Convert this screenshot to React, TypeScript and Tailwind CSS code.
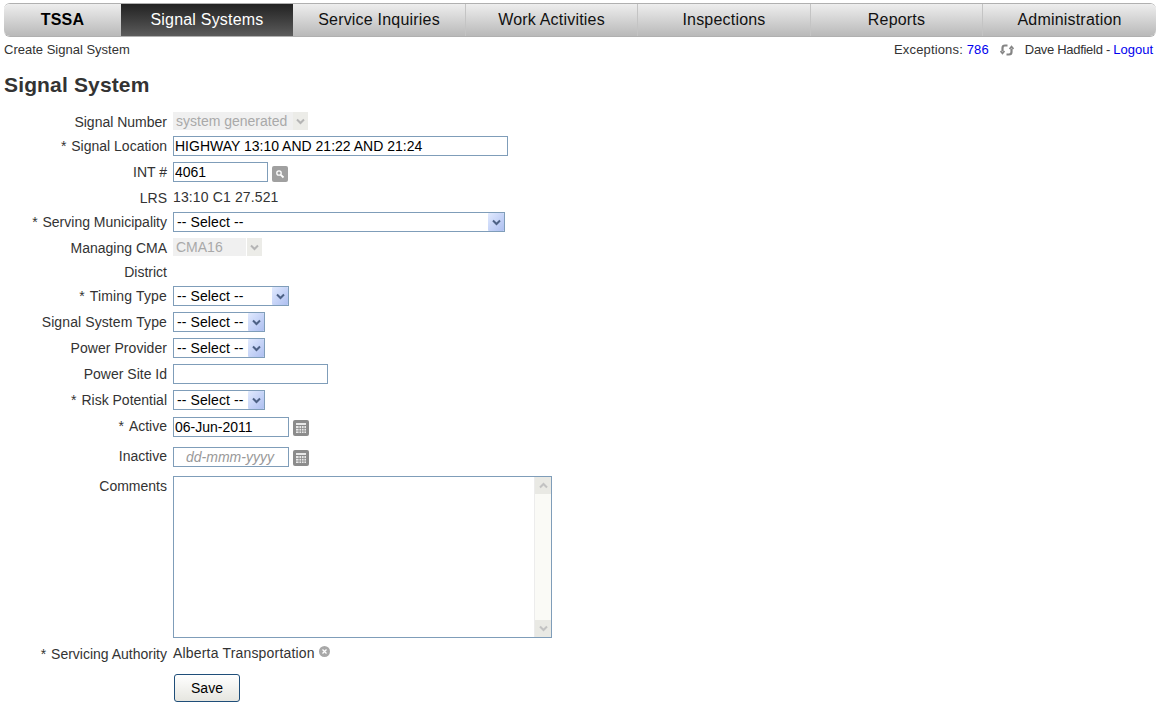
import React from "react";

const base = "text-[#111] bg-gradient-to-b from-[#eeeeee] to-[#b9b9b9]";
const nav = [
  { t: "TSSA", w: "w-[117px]", c: "font-bold text-black bg-gradient-to-b from-[#eeeeee] to-[#b9b9b9] rounded-l-[6px]" },
  { t: "Signal Systems", w: "w-[172px]", c: "text-white bg-gradient-to-b from-[#232323] to-[#5c5c5c]" },
  { t: "Service Inquiries", w: "w-[172px]", c: base },
  { t: "Work Activities", w: "w-[172px]", c: `${base} border-l border-[#c4c4c4]` },
  { t: "Inspections", w: "w-[173px]", c: `${base} border-l border-[#c4c4c4]` },
  { t: "Reports", w: "w-[172px]", c: `${base} border-l border-[#c4c4c4]` },
  { t: "Administration", w: "w-[174px]", c: `${base} border-l border-[#c4c4c4] rounded-r-[6px]` },
];

function Row({ label, req = false, mt, children, h = "h-[20px]", top = false, lc = "" }: { label: string; req?: boolean; mt: string; children?: React.ReactNode; h?: string; top?: boolean; lc?: string }) {
  return (
    <div className={`flex ${top ? "items-start" : "items-center"} ${h} ${mt}`}>
      <div className={`relative w-[167px] shrink-0 text-right text-[14px] leading-[20px] text-[#333] ${lc}`}>
        {req && <span className="mr-[1px]">* </span>}
        {label}
      </div>
      <div className="ml-[6px] flex items-center">{children}</div>
    </div>
  );
}

function Sel({ w, value = "-- Select --" }: { w: string; value?: string }) {
  return (
    <div role="combobox" aria-expanded="false" className={`flex h-[20px] items-start justify-between border border-[#7f9db9] bg-white pl-[3px] text-[14px] leading-[19px] tracking-[0.1px] text-black ${w}`}>
      <span>{value}</span>
      <span className="flex h-[18px] w-[16px] items-center justify-center rounded-[1px] bg-gradient-to-br from-[#e1eafe] to-[#aebff0]">
        <svg width="9" height="7" viewBox="0 0 9 7"><path d="M1 1.5 L4.5 5 L8 1.5" fill="none" stroke="#4d6185" strokeWidth="2" /></svg>
      </span>
    </div>
  );
}

function Disabled({ w, value, gap }: { w: string; value: string; gap: string }) {
  return (
    <div className="flex h-[18px] items-center">
      <div className={`flex h-[18px] ${w} items-center bg-[#f0f0f0] pl-[3px] text-[14px] text-[#a9a9a9]`}>{value}</div>
      <span className={`flex h-[18px] w-[15px] items-center justify-center bg-[#ecece8] ${gap}`}>
        <svg width="9" height="7" viewBox="0 0 9 7"><path d="M1 1.5 L4.5 5 L8 1.5" fill="none" stroke="#b5b5b5" strokeWidth="2" /></svg>
      </span>
    </div>
  );
}

function Txt({ w, value, placeholder }: { w: string; value?: string; placeholder?: string }) {
  return (
    <input
      readOnly
      defaultValue={value}
      placeholder={placeholder}
      className={`block h-[20px] ${w} border border-[#7f9db9] bg-white text-[14px] text-black outline-none ${placeholder ? "pl-[12px] italic placeholder:text-[#999]" : "pl-[1px]"}`}
    />
  );
}

function Cal() {
  return (
    <span className="ml-[4px] mt-[2px] flex h-[16px] w-[16px] items-center justify-center rounded-[2px] bg-[#8c8c8c]">
      <svg width="12" height="11" viewBox="0 0 12 11">
        <rect x="1" y="0" width="10" height="2" fill="#e8e8e8" />
        <rect x="1" y="3" width="10" height="7" fill="#e8e8e8" />
        <path d="M4 3v7M6.5 3v7M9 3v7M1 5.5h10M1 8h10" stroke="#8c8c8c" strokeWidth="0.8" />
      </svg>
    </span>
  );
}

export default function App() {
  return (
    <div className="h-[706px] w-[1160px] overflow-hidden bg-white font-['Liberation_Sans',Arial,sans-serif] text-[14px] text-[#333]">
      <nav className="ml-[4px] mt-[3px] flex h-[34px] w-[1152px] rounded-[6px] border-b border-t border-[#b0b0b0]">
        {nav.map((n) => (
          <div key={n.t} className={`flex h-full items-center justify-center text-[16px] tracking-[0.2px] ${n.w} ${n.c}`}>
            {n.t}
          </div>
        ))}
      </nav>

      <div className="flex h-[24px] items-center justify-between px-[4px] pt-[2px] text-[13px]">
        <span className="text-[#333]">Create Signal System</span>
        <div className="mr-[3px] flex items-center">
          <span className="tracking-[0.15px]">Exceptions: <span className="text-[#0000ee]">786</span></span>
          <svg className="ml-[11px]" width="14" height="14" viewBox="0 0 14 14" fill="none" stroke="#858585" strokeWidth="2.2">
            <path d="M7.5 2.5 H5 Q2.5 2.5 2.5 5 V8.5" />
            <path d="M6.5 11.5 H9 Q11.5 11.5 11.5 9 V5.5" />
            <path d="M0.5 8 L2.5 10.5 L4.5 8" strokeWidth="1.6" />
            <path d="M9.5 6 L11.5 3.5 L13.5 6" strokeWidth="1.6" />
          </svg>
          <span className="ml-[11px]"><span className="tracking-[-0.3px]">Dave Hadfield - </span><span className="text-[#0000ee]">Logout</span></span>
        </div>
      </div>

      <h1 className="ml-[4px] mt-[12px] text-[21px] font-bold leading-[24px] tracking-[0.15px] text-[#333]">Signal System</h1>

      <form>
        <Row label="Signal Number" mt="mt-[14px]" lc="top-px">
          <Disabled w="w-[120px]" value="system generated" gap="" />
        </Row>
        <Row req label="Signal Location" mt="mt-[5px]">
          <Txt w="w-[335px]" value="HIGHWAY 13:10 AND 21:22 AND 21:24" />
        </Row>
        <Row label="INT #" mt="mt-[6px]">
          <Txt w="w-[95px]" value="4061" />
          <span className="ml-[4px] mt-[3px] flex h-[16px] w-[16px] items-center justify-center rounded-[2px] bg-[#a0a0a0]">
            <svg width="10" height="10" viewBox="0 0 10 10" fill="none" stroke="#fff">
              <circle cx="4" cy="4" r="2.2" strokeWidth="1.3" />
              <path d="M5.8 5.8 L8.5 8.5" strokeWidth="1.8" />
            </svg>
          </span>
        </Row>
        <Row label="LRS" mt="mt-[5px]" lc="top-px">
          <span className="tracking-[0.13px] text-[#333]">13:10 C1 27.521</span>
        </Row>
        <Row req label="Serving Municipality" mt="mt-[5px]">
          <Sel w="w-[332px]" />
        </Row>
        <Row label="Managing CMA" mt="mt-[5px]" lc="top-px">
          <Disabled w="w-[73px]" value="CMA16" gap="ml-[1px]" />
        </Row>
        <Row label="District" mt="mt-[5px]" />
        <Row req label="Timing Type" mt="mt-[4px]" lc="tracking-[0.15px]">
          <Sel w="w-[116px]" />
        </Row>
        <Row label="Signal System Type" mt="mt-[6px]" lc="tracking-[0.1px]">
          <Sel w="w-[92px]" />
        </Row>
        <Row label="Power Provider" mt="mt-[6px]" lc="tracking-[0.05px]">
          <Sel w="w-[92px]" />
        </Row>
        <Row label="Power Site Id" mt="mt-[6px]">
          <Txt w="w-[155px]" />
        </Row>
        <Row req label="Risk Potential" mt="mt-[6px]">
          <Sel w="w-[92px]" />
        </Row>
        <Row req label="Active" mt="mt-[7px]" lc="-top-px">
          <Txt w="w-[116px]" value="06-Jun-2011" />
          <Cal />
        </Row>
        <Row label="Inactive" mt="mt-[10px]" lc="-top-px">
          <Txt w="w-[116px]" placeholder="dd-mmm-yyyy" />
          <Cal />
        </Row>
        <Row label="Comments" mt="mt-[9px]" h="h-[162px]" top>
          <div className="flex h-[162px] w-[379px] border border-[#7f9db9] bg-white">
            <textarea readOnly className="h-full flex-1 resize-none outline-none" />
            <div className="flex w-[17px] flex-col justify-between border-l border-[#ececec] bg-[#fafaf6]">
              <span className="flex h-[17px] items-center justify-center bg-[#e9e9e4]">
                <svg width="9" height="7" viewBox="0 0 9 7"><path d="M1 5.5 L4.5 2 L8 5.5" fill="none" stroke="#c2c2c2" strokeWidth="2" /></svg>
              </span>
              <span className="flex h-[17px] items-center justify-center bg-[#e9e9e4]">
                <svg width="9" height="7" viewBox="0 0 9 7"><path d="M1 1.5 L4.5 5 L8 1.5" fill="none" stroke="#c2c2c2" strokeWidth="2" /></svg>
              </span>
            </div>
          </div>
        </Row>
        <Row req label="Servicing Authority" mt="mt-[5px]" lc="top-px">
          <span className="tracking-[0.18px] text-[#333]">Alberta Transportation</span>
          <span className="ml-[4px] mb-[4px] flex h-[11px] w-[11px] items-center justify-center rounded-full bg-[#a8a8a8]">
            <svg width="7" height="7" viewBox="0 0 7 7"><path d="M1.5 1.5 L5.5 5.5 M5.5 1.5 L1.5 5.5" stroke="#fff" strokeWidth="1.3" /></svg>
          </span>
        </Row>
        <div className="ml-[174px] mt-[11px]">
          <button type="button" className="h-[28px] w-[66px] rounded-[3px] border border-[#1f4e79] bg-gradient-to-b from-white to-[#e6e6e0] text-[14px] text-black">
            Save
          </button>
        </div>
      </form>
    </div>
  );
}
